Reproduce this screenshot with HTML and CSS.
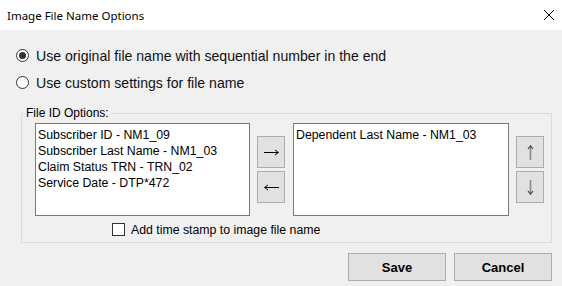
FILE: index.html
```html
<!DOCTYPE html>
<html>
<head>
<meta charset="utf-8">
<link rel="stylesheet" href="styles.css">
</head>
<body>
<div class="dialog">
  <div class="titlebar">
    <span class="title">Image File Name Options</span>
    <svg class="close" width="12" height="12" viewBox="0 0 12 12"><path d="M1 1 L11 11 M11 1 L1 11" stroke="#000" stroke-width="1" fill="none"/></svg>
  </div>
  <div class="body">
    <div class="options">
      <label class="radio-row"><span class="radio checked"></span><span>Use original file name with sequential number in the end</span></label>
      <label class="radio-row"><span class="radio"></span><span>Use custom settings for file name</span></label>
    </div>
    <div class="group">
      <div class="group-label">File ID Options:</div>
      <div class="group-row">
        <div class="listbox left-list">
          <div class="item">Subscriber ID - NM1_09</div>
          <div class="item">Subscriber Last Name - NM1_03</div>
          <div class="item">Claim Status TRN - TRN_02</div>
          <div class="item">Service Date - DTP*472</div>
        </div>
        <div class="btn-col">
          <div class="small-btn"><svg width="15" height="7" viewBox="0 0 15 7"><path d="M0 3.5 H14" stroke="#000" stroke-width="1"/><path d="M11 1 L14.5 3.5 L11 6" stroke="#000" stroke-width="1" fill="none"/></svg></div>
          <div class="small-btn"><svg width="15" height="7" viewBox="0 0 15 7"><path d="M1 3.5 H15" stroke="#000" stroke-width="1"/><path d="M4 1 L0.5 3.5 L4 6" stroke="#000" stroke-width="1" fill="none"/></svg></div>
        </div>
        <div class="listbox right-list">
          <div class="item">Dependent Last Name - NM1_03</div>
        </div>
        <div class="btn-col">
          <div class="small-btn"><svg width="7" height="15" viewBox="0 0 7 15"><path d="M3.5 2 V15" stroke="#8a8a8a" stroke-width="1.6"/><path d="M1 4 L3.5 0.8 L6 4" stroke="#444" stroke-width="1.2" fill="none"/></svg></div>
          <div class="small-btn"><svg width="7" height="15" viewBox="0 0 7 15"><path d="M3.5 0 V13" stroke="#8a8a8a" stroke-width="1.6"/><path d="M1 11 L3.5 14.2 L6 11" stroke="#444" stroke-width="1.2" fill="none"/></svg></div>
        </div>
      </div>
      <label class="check-row"><span class="checkbox"></span><span>Add time stamp to image file name</span></label>
    </div>
    <div class="actions">
      <div class="btn">Save</div>
      <div class="btn">Cancel</div>
    </div>
  </div>
</div>
</body>
</html>
```
FILE: styles.css
```css
* { box-sizing: border-box; }
html, body { margin: 0; padding: 0; }
body {
  width: 562px;
  height: 286px;
  background: #f0f0f0;
  font-family: "Liberation Sans", Arial, sans-serif;
  color: #000;
  overflow: hidden;
}
.titlebar {
  height: 30px;
  background: #fff;
  display: flex;
  align-items: center;
  justify-content: space-between;
  padding: 0 7px 0 7px;
}
.title {
  font-family: "Noto Sans", "Open Sans", sans-serif;
  font-size: 11.5px;
  color: #000;
}
.options {
  padding-top: 12px;
}
.radio-row {
  display: flex;
  align-items: center;
  height: 27px;
  padding-left: 16px;
  font-size: 14.1px;
  color: #111;
}
.radio {
  width: 13px;
  height: 13px;
  border: 1px solid #333;
  border-radius: 50%;
  background: #fff;
  margin-right: 7px;
  display: flex;
  align-items: center;
  justify-content: center;
}
.radio.checked::after {
  content: "";
  width: 7px;
  height: 7px;
  border-radius: 50%;
  background: #333;
}
.group {
  margin: 17px 10px 0 21px;
  border: 1px solid #dcdcdc;
  height: 130px;
}
.group-label {
  display: table;
  margin: -9px 0 0 3px;
  padding: 0 1px;
  line-height: 16px;
  font-size: 12px;
  background: #f0f0f0;
}
.group-row {
  display: flex;
  align-items: flex-start;
  margin-top: 2px;
  padding-left: 13px;
}
.listbox {
  height: 93px;
  background: #fff;
  border: 1px solid #7a7a7a;
  padding: 3px 2px;
  font-size: 12.3px;
  line-height: 16px;
}
.left-list { width: 215px; }
.right-list { width: 216px; margin-left: 8px; }
.btn-col {
  display: flex;
  flex-direction: column;
  gap: 3px;
  margin-left: 7px;
  margin-top: 13px;
}
.small-btn {
  width: 28px;
  height: 32px;
  background: #e1e1e1;
  border: 1px solid #adadad;
  display: flex;
  align-items: center;
  justify-content: center;
}
.check-row {
  display: flex;
  align-items: center;
  margin-top: 7px;
  padding-left: 90px;
  font-size: 12.3px;
  height: 13px;
}
.checkbox {
  width: 13px;
  height: 13px;
  border: 1px solid #333;
  background: #fff;
  margin-right: 6px;
}
.actions {
  display: flex;
  justify-content: flex-end;
  gap: 8px;
  margin: 10px 10px 0 0;
}
.btn {
  width: 98px;
  height: 28px;
  background: #e1e1e1;
  border: 1px solid #adadad;
  display: flex;
  align-items: center;
  justify-content: center;
  font-weight: bold;
  font-size: 13px;
}
```
